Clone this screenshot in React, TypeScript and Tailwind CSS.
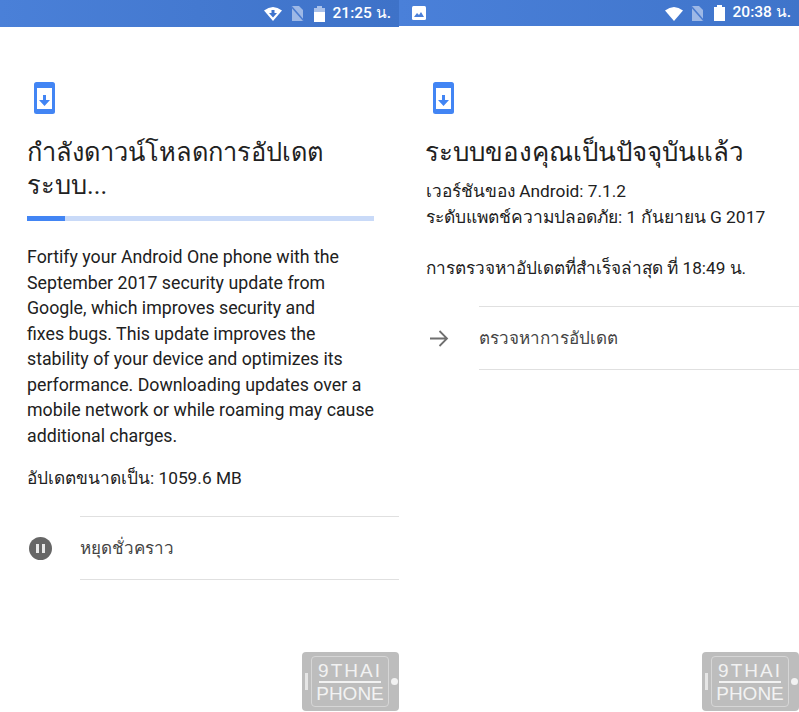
const FONT = "font-['Roboto','Noto_Sans','Noto_Sans_CJK_SC',sans-serif]";

const WifiIcon = ({ locked }: { locked?: boolean }) => (
  <svg width="18" height="15" viewBox="0 0 18 15" className="shrink-0">
    <path d="M0 4.5 Q9 -2.5 18 4.5 L9 15 Z" fill="#fff" />
    {locked && <path d="M7.5 4h3v3H13l-4 4.5L5 7h2.5z" fill="#3f74cd" />}
  </svg>
);

const NoSimIcon = () => (
  <svg width="13" height="15" viewBox="0 0 13 15" className="shrink-0">
    <path d="M1 0h7l4 4v11H1z" fill="#9db8e6" />
    <path d="M0 0l13 15" stroke="#4a7bd0" strokeWidth="1.5" />
  </svg>
);

const BatteryIcon = ({ full }: { full?: boolean }) => (
  <svg width="11" height="16" viewBox="0 0 11 16" className="shrink-0">
    <path d="M3 0h5v2h3v14H0V2h3z" fill={full ? "#fff" : "#a9c1ea"} />
    {!full && <rect x="0" y="6" width="11" height="10" fill="#fff" />}
  </svg>
);

const PhoneDownload = () => (
  <svg width="21" height="32" viewBox="0 0 21 32">
    <rect width="21" height="32" rx="2.5" fill="#4285f4" />
    <rect x="3" y="6" width="15" height="21" fill="#fff" />
    <path d="M9 13h3v5h4l-5.5 6L5 18h4z" fill="#4285f4" />
  </svg>
);

const Watermark = () => (
  <div className="flex justify-end">
    <div className="w-[97px] h-[59px] bg-[#bdbdbd] rounded-sm flex items-center pl-[3px] font-['Liberation_Sans',sans-serif]">
      <div className="w-[3px] h-[17px] bg-[#e6e6e6] shrink-0 mr-[3px]" />
      <div className="w-[78px] h-[51px] border border-[#d6d6d6] rounded-sm flex flex-col items-center justify-center text-[#f2f2f2] leading-none shrink-0">
        <span className="text-[19px] tracking-[2px]">9THAI</span>
        <div className="w-[62px] h-[2px] bg-[#f2f2f2] my-[1px]" />
        <span className="text-[19px]">PHONE</span>
      </div>
      <div className="w-[7px] h-[7px] rounded-full bg-[#f2f2f2] shrink-0 ml-[2px]" />
    </div>
  </div>
);

const ActionRow = ({ icon, label, offset }: { icon: React.ReactNode; label: string; offset: string }) => (
  <div className="flex">
    <div className={`${offset} flex items-center justify-center shrink-0`}>{icon}</div>
    <div className="flex-1 h-[64px] border-y border-[#e0e0e0] flex items-center pt-[2px] text-[17px] text-[#444]">{label}</div>
  </div>
);

export default function App() {
  return (
    <div className={`${FONT} w-[799px] h-[712px] bg-white grid grid-cols-[399px_400px] text-[#212121] overflow-hidden`}>
      {/* left phone */}
      <div className="flex flex-col">
        <div className="h-[27px] bg-gradient-to-r from-[#4a80d8] to-[#3e72c8] flex items-center justify-end pr-[8px] text-white text-[15.5px] font-medium">
          <WifiIcon locked />
          <span className="w-[9px]" />
          <NoSimIcon />
          <span className="w-[10px]" />
          <BatteryIcon />
          <span className="w-[8px]" />
          <span>21:25 น.</span>
        </div>
        <div className="pl-[34px] pt-[55px]">
          <PhoneDownload />
        </div>
        <div className="pl-[27px] pr-[25px]">
          <h1 className="text-[25.4px] leading-[33px] mt-[22px] font-normal">กำลังดาวน์โหลดการอัปเดต<br />ระบบ...</h1>
          <div className="h-[5px] bg-[#c9daf8] mt-[14px]">
            <div className="h-full w-[38px] bg-[#4285f4]" />
          </div>
          <p className="text-[17.75px] leading-[25.5px] mt-[24px] whitespace-nowrap">
            Fortify your Android One phone with the<br />
            September 2017 security update from<br />
            Google, which improves security and<br />
            fixes bugs. This update improves the<br />
            stability of your device and optimizes its<br />
            performance. Downloading updates over a<br />
            mobile network or while roaming may cause<br />
            additional charges.
          </p>
          <p className="text-[17.3px] leading-[25px] mt-[17px]">อัปเดตขนาดเป็น: 1059.6 MB</p>
        </div>
        <div className="mt-[25px]">
          <ActionRow
            offset="w-[80px]"
            label="หยุดชั่วคราว"
            icon={
              <div className="w-[23px] h-[23px] rounded-full bg-[#666] flex items-center justify-center gap-[3px]">
                <span className="w-[3px] h-[9px] bg-[#e8e8e8]" />
                <span className="w-[3px] h-[9px] bg-[#e8e8e8]" />
              </div>
            }
          />
        </div>
        <div className="mt-[72px]">
          <Watermark />
        </div>
      </div>

      {/* right phone */}
      <div className="flex flex-col">
        <div className="h-[26px] bg-gradient-to-r from-[#4a80d9] to-[#3f74ca] flex items-center pl-[13px] pr-[8px] text-white text-[15.5px] font-medium">
          <svg width="14" height="14" viewBox="0 0 14 14" className="shrink-0">
            <rect width="14" height="14" rx="1.5" fill="#fff" />
            <path d="M2 11l3-4 2 2 2-3 3 5z" fill="#4a7fd9" />
          </svg>
          <div className="flex-1" />
          <WifiIcon />
          <span className="w-[8px]" />
          <NoSimIcon />
          <span className="w-[10px]" />
          <BatteryIcon full />
          <span className="w-[8px]" />
          <span>20:38 น.</span>
        </div>
        <div className="pl-[34px] pt-[56px]">
          <PhoneDownload />
        </div>
        <div className="pl-[26px]">
          <h1 className="text-[25.9px] leading-[34px] mt-[21px] font-normal">ระบบของคุณเป็นปัจจุบันแล้ว</h1>
          <div className="pl-[1px]">
            <p className="text-[17.3px] leading-[26px] mt-[9px]">เวอร์ชันของ Android: 7.1.2</p>
            <p className="text-[17.4px] leading-[26px]">ระดับแพตช์ความปลอดภัย: 1 กันยายน G 2017</p>
            <p className="text-[17.2px] leading-[26px] mt-[25px]">การตรวจหาอัปเดตที่สำเร็จล่าสุด ที่ 18:49 น.</p>
          </div>
        </div>
        <div className="mt-[25px]">
          <ActionRow
            offset="w-[80px]"
            label="ตรวจหาการอัปเดต"
            icon={
              <svg width="20" height="17" viewBox="0 0 20 17" className="mr-[1px]">
                <path d="M1 8.5h17M10.5 1l7.5 7.5-7.5 7.5" fill="none" stroke="#6f6f6f" strokeWidth="1.8" />
              </svg>
            }
          />
        </div>
        <div className="mt-[282px]">
          <Watermark />
        </div>
      </div>
    </div>
  );
}
